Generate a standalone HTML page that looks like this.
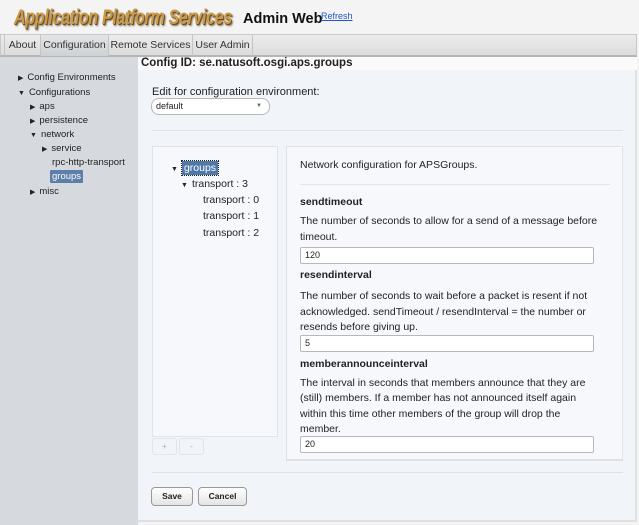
<!DOCTYPE html>
<html><head><meta charset="utf-8"><style>
*{box-sizing:border-box;margin:0;padding:0}
body{width:639px;height:525px;background:#f4f4f4;font-family:"Liberation Sans",Arial,sans-serif;position:relative;overflow:hidden;color:#222}
.a{position:absolute;white-space:nowrap}
.title{left:14px;top:6px;font-size:21px;font-weight:bold;font-style:italic;color:#c99a4a;text-shadow:1px 1px 0 #6b4a1a,2px 2px 2px #7a6a50;letter-spacing:-0.5px;transform:scaleX(0.77);transform-origin:left}
.tabs{left:0;top:34px;width:637px;height:23px;background:linear-gradient(#ececec,#dcdcdc);border:1px solid #c8c8c8;border-bottom:2px solid #b5b5b5}
.tab{position:absolute;top:0;height:21px;font-size:10.5px;line-height:21px;text-align:center;border-right:1px solid #c4c4c4;color:#333}
.side{left:0;top:57px;width:138px;height:468px;background:#d6d9de}
.si{font-size:9.5px;color:#222}
.tri{font-size:7px;margin-right:4px}
.main{left:138px;top:70px;width:499px;height:452px;background:#f1f4f9;border-right:2px solid #dde0e4;border-bottom:2px solid #dde0e4}
.box{background:#f6f8fb;border:1px solid #e0e3e7}
.inp{background:#fff;border:1px solid #b8b8b8;border-radius:2px;height:17px;font-size:9px;line-height:15px;padding-left:4px}
.t{font-size:10.5px;color:#222}
.b{font-weight:bold}
.btn{border:1px solid #999;border-radius:4px;background:linear-gradient(#fff,#e4e4e4);font-size:8.5px;font-weight:bold;text-align:center;line-height:17px;height:19px}
</style></head><body>
<div class="a title">Application Platform Services</div>
<div class="a" style="left:243px;top:11px;font-size:14.5px;font-weight:bold;color:#111">Admin Web</div>
<div class="a" style="left:321px;top:11px;font-size:9px;color:#2255cc;text-decoration:underline">Refresh</div>
<div class="a tabs">
<div class="tab" style="left:3px;width:37px;border-left:1px solid #c4c4c4">About</div>
<div class="tab" style="left:40px;width:68px;background:linear-gradient(#e2e4e6,#cfd2d5)">Configuration</div>
<div class="tab" style="left:108px;width:84px">Remote Services</div>
<div class="tab" style="left:192px;width:60px">User Admin</div>
</div>
<div class="a side"></div>
<div class="a" style="left:138px;top:57px;width:499px;height:13px;background:#fafafa"></div>
<div class="a" style="left:141px;top:57px;font-size:11.5px;font-weight:bold;color:#222">Config ID: se.natusoft.osgi.aps.groups</div>
<div class="a si" style="left:18px;top:72px"><span class="tri">▶</span>Config Environments</div>
<div class="a si" style="left:18px;top:87px"><span class="tri">▼</span>Configurations</div>
<div class="a si" style="left:30px;top:101px"><span class="tri">▶</span>aps</div>
<div class="a si" style="left:30px;top:115px"><span class="tri">▶</span>persistence</div>
<div class="a si" style="left:30px;top:129px"><span class="tri">▼</span>network</div>
<div class="a si" style="left:42px;top:143px"><span class="tri">▶</span>service</div>
<div class="a si" style="left:52px;top:157px">rpc-http-transport</div>
<div class="a si" style="left:50px;top:170px;background:#5b7fa8;color:#fff;padding:1px 2px;border-radius:1px">groups</div>
<div class="a si" style="left:30px;top:186px"><span class="tri">▶</span>misc</div>
<div class="a main"></div>
<div class="a t" style="left:152px;top:86px;font-size:11px">Edit for configuration environment:</div>
<div class="a" style="left:151px;top:98px;width:119px;height:17px;background:#fff;border:1px solid #b8b8b8;border-radius:8px;font-size:9px;line-height:15px;padding-left:4px">default<span style="position:absolute;right:7px;top:0;font-size:6px;color:#666">▼</span></div>
<div class="a" style="left:152px;top:130px;width:471px;height:1px;background:#e0e3e7"></div>
<div class="a box" style="left:152px;top:146px;width:126px;height:291px"></div>
<div class="a si" style="left:171px;top:162px;font-size:10.5px"><span class="tri">▼</span><span style="background:#4f77a8;color:#fff;padding:1px 2px;outline:1px dotted #222">groups</span></div>
<div class="a si" style="left:181px;top:178px;font-size:10.5px"><span class="tri">▼</span>transport : 3</div>
<div class="a si" style="left:203px;top:194px;font-size:10.5px">transport : 0</div>
<div class="a si" style="left:203px;top:210px;font-size:10.5px">transport : 1</div>
<div class="a si" style="left:203px;top:227px;font-size:10.5px">transport : 2</div>
<div class="a" style="left:152px;top:438px;width:25px;height:17px;border:1px solid #e2e4e7;border-radius:3px;font-size:8px;color:#aaa;text-align:center;line-height:15px">+</div>
<div class="a" style="left:179px;top:438px;width:25px;height:17px;border:1px solid #e2e4e7;border-radius:3px;font-size:8px;color:#aaa;text-align:center;line-height:15px">-</div>
<div class="a box" style="left:286px;top:146px;width:337px;height:315px;border-bottom:2px solid #dde0e4"></div>
<div class="a t" style="left:300px;top:159px">Network configuration for APSGroups.</div>
<div class="a" style="left:300px;top:184px;width:310px;height:1px;background:#e2e4e8"></div>
<div class="a t b" style="left:300px;top:196px">sendtimeout</div>
<div class="a t" style="left:300px;top:214px;line-height:15.5px;white-space:normal;width:312px">The number of seconds to allow for a send of a message before timeout.</div>
<div class="a inp" style="left:300px;top:247px;width:294px">120</div>
<div class="a t b" style="left:300px;top:269px">resendinterval</div>
<div class="a t" style="left:300px;top:289px;line-height:15.5px;white-space:normal;width:310px">The number of seconds to wait before a packet is resent if not acknowledged. sendTimeout / resendInterval = the number or resends before giving up.</div>
<div class="a inp" style="left:300px;top:335px;width:294px">5</div>
<div class="a t b" style="left:300px;top:358px">memberannounceinterval</div>
<div class="a t" style="left:300px;top:376px;line-height:15.3px">The interval in seconds that members announce that they are<br>(still) members. If a member has not announced itself again<br>within this time other members of the group will drop the<br>member.</div>
<div class="a inp" style="left:300px;top:436px;width:294px">20</div>
<div class="a" style="left:152px;top:472px;width:471px;height:1px;background:#e0e3e7"></div>
<div class="a btn" style="left:151px;top:487px;width:42px">Save</div>
<div class="a btn" style="left:198px;top:487px;width:49px">Cancel</div>
</body></html>
